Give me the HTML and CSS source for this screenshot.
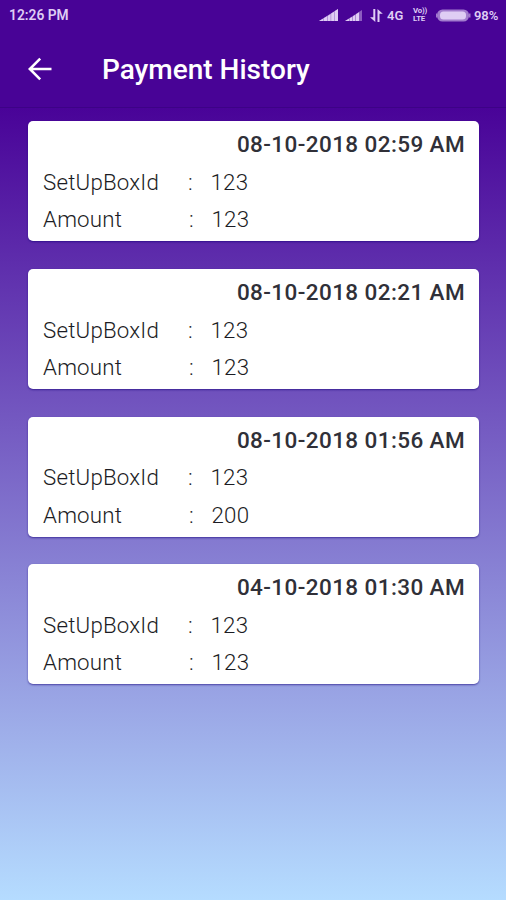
FILE: index.html
```html
<!DOCTYPE html>
<html lang="en">
<head>
    <meta charset="UTF-8">
    <meta name="viewport" content="width=device-width, initial-scale=1.0">
    <title>Payment History</title>
    <link rel="stylesheet" href="styles.css">
</head>
<body>
    <header class="app-header">
        <div class="status-bar">
            <span class="clock">12:26 PM</span>
            <div class="status-icons">
                <svg class="signal-1" width="19" height="12" viewBox="0 0 19 12">
                    <path opacity=".55" d="M0 12L19 0V12z"/>
                    <path d="M0 12L4 9.7V12zM4.6 9.2L8 7.3V12H4.6zM8.6 6.9L11.6 5V12H8.6zM12.2 4.5L15 2.7V12H12.2zM15.6 2.2L19 0V12H15.6z"/>
                </svg>
                <svg class="signal-2" width="17" height="11" viewBox="0 0 17 11">
                    <path opacity=".45" d="M0 11L17 0V11z"/>
                    <path d="M0 11L4 8.7V11zM4.6 8.3L7.4 6.7V11H4.6zM8 6.3L10.4 4.8V11H8zM11 4.3L14 2.3V11H11z"/>
                </svg>
                <svg class="data-arrows" width="13" height="13" viewBox="0 0 13 13">
                    <path d="M3.3 0H5.3V13L0 8.3H3.3zM7.5 0L12.8 4.7H9.5V13H7.5z"/>
                </svg>
                <span class="network">4G</span>
                <span class="volte"><span>Vo))</span><span>LTE</span></span>
                <svg class="battery" width="35" height="13" viewBox="0 0 35 13">
                    <rect x="1" y=".5" width="32" height="12" rx="5.5" opacity=".6"/>
                    <rect x="4" y="2.5" width="26" height="8" rx="3.5"/>
                    <path d="M0 4.5h1v4H0zM33 4.5h1.5v4H33z" opacity=".6"/>
                </svg>
                <span class="percent">98%</span>
            </div>
        </div>
        <div class="toolbar">
            <svg class="back" width="24" height="24" viewBox="0 0 24 24">
                <path d="M12.2 1.6L1.8 12l10.4 10.4M1.8 12H23.5"/>
            </svg>
            <h1>Payment History</h1>
        </div>
    </header>

    <main class="payments">
        <div class="card">
            <div class="date">08-10-2018 02:59 AM</div>
            <div class="row"><span class="label">SetUpBoxId</span><span class="colon">:</span><span>123</span></div>
            <div class="row amount"><span class="label">Amount</span><span class="colon">:</span><span>123</span></div>
        </div>
        <div class="card">
            <div class="date">08-10-2018 02:21 AM</div>
            <div class="row"><span class="label">SetUpBoxId</span><span class="colon">:</span><span>123</span></div>
            <div class="row amount"><span class="label">Amount</span><span class="colon">:</span><span>123</span></div>
        </div>
        <div class="card">
            <div class="date">08-10-2018 01:56 AM</div>
            <div class="row"><span class="label">SetUpBoxId</span><span class="colon">:</span><span>123</span></div>
            <div class="row amount"><span class="label">Amount</span><span class="colon">:</span><span>200</span></div>
        </div>
        <div class="card">
            <div class="date">04-10-2018 01:30 AM</div>
            <div class="row"><span class="label">SetUpBoxId</span><span class="colon">:</span><span>123</span></div>
            <div class="row amount"><span class="label">Amount</span><span class="colon">:</span><span>123</span></div>
        </div>
    </main>
</body>
</html>
```
FILE: styles.css
```css
* {
    box-sizing: border-box;
}

body {
    font-family: Roboto, sans-serif;
    margin: 0;
    height: 900px;
    display: flex;
    flex-direction: column;
    background: #490396;
}

.app-header {
    height: 108px;
    flex: none;
    background: #480396;
    border-bottom: 1px solid #3d0286;
    color: white;
}

.status-bar {
    height: 30px;
    padding: 0 8px 0 9px;
    display: flex;
    align-items: center;
    justify-content: space-between;
    color: #dfcdf4;
    font-size: 13px;
    font-weight: 600;
}

.clock {
    font-size: 13.8px;
}

.status-icons {
    display: flex;
    align-items: center;
}

.status-icons svg {
    fill: #dfcdf4;
}

.signal-1 {
    margin-right: 7px;
}

.signal-2 {
    margin: 1px 8px 0 0;
}

.data-arrows {
    margin-right: 4px;
}

.network {
    width: 18px;
    margin-right: 8px;
}

.volte {
    display: flex;
    flex-direction: column;
    width: 15px;
    margin-right: 8px;
    font-size: 7.8px;
    font-weight: 700;
    line-height: 8px;
    letter-spacing: -0.2px;
}

.battery {
    margin-right: 3px;
}

.percent {
    width: 24px;
    letter-spacing: -0.1px;
}

.toolbar {
    height: 78px;
    display: flex;
    align-items: center;
    padding-left: 28px;
}

.back {
    fill: none;
    stroke: white;
    stroke-width: 2.6;
}

.toolbar h1 {
    margin: 0 0 0 50px;
    font-size: 28px;
    font-weight: 500;
}

.payments {
    flex: 1;
    padding: 13.4px 27px 0 28px;
    display: flex;
    flex-direction: column;
    gap: 27.7px;
    background: linear-gradient(#490398, #b5dcff);
}

.card {
    height: 120px;
    padding: 5px 15px 0;
    background: white;
    border-radius: 5px;
    box-shadow: 0 1px 2px rgba(20, 0, 120, 0.6);
    color: #1c1c24;
    font-size: 22.3px;
    font-weight: 300;
    letter-spacing: 0.2px;
}

.date {
    height: 37.5px;
    line-height: 36px;
    text-align: right;
    color: #303038;
    font-size: 22.5px;
    font-weight: 500;
    letter-spacing: 0.4px;
    margin-right: -1px;
}

.row {
    display: flex;
    height: 37.3px;
    line-height: 37.5px;
}

.label {
    width: 145px;
}

.colon {
    width: 22.5px;
}

.amount .label {
    width: 146px;
}
```
